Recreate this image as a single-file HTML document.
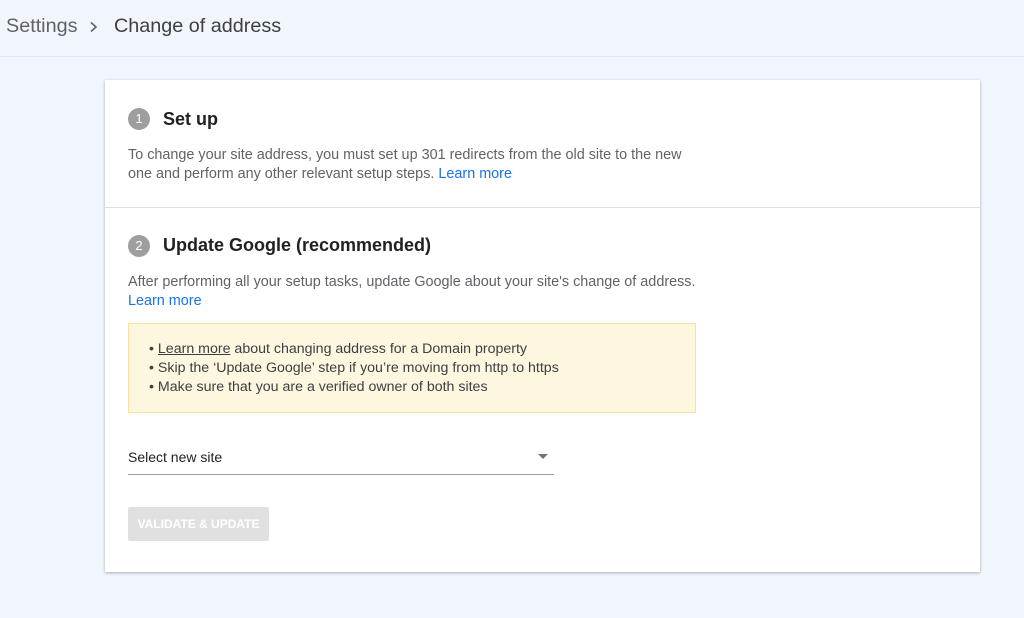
<!DOCTYPE html>
<html><head><style>
body{margin:0;width:1024px;height:618px;background:#f1f5fc;font-family:"Liberation Sans",sans-serif;position:relative;overflow:hidden}
.hdr{position:absolute;left:0;top:0;width:1024px;height:56px;border-bottom:1px solid #e3e8ef;}
.bc{position:absolute;top:15px;font-size:19.8px;color:#3c4043}
.card{position:absolute;left:105px;top:80px;width:875px;height:492px;background:#fff;box-shadow:0 1px 3px rgba(0,0,0,.3)}
.num{position:absolute;width:22px;height:22px;border-radius:50%;background:#9e9e9e;color:#fff;font-size:13px;text-align:center;line-height:22px}
.ttl{position:absolute;font-size:18px;font-weight:bold;color:#202124}
.p{position:absolute;font-size:14.4px;color:#5f6368;line-height:19px;white-space:nowrap}
a{color:#1a73e8;text-decoration:none}
.note{position:absolute;left:23px;top:243px;width:568px;height:90px;background:#fef7e0;border:1px solid #f6e3a4;box-sizing:border-box;padding:16px 0 0 20px;font-size:14.2px;line-height:19px;color:#3c4043;white-space:nowrap}
.note u{color:#3c4043}
</style></head><body>
<div class="hdr"></div>
<div class="bc" style="left:6px;color:#5f6368">Settings</div>
<svg style="position:absolute;left:89px;top:21px" width="10" height="12" viewBox="0 0 10 12"><path d="M2 1.5 L7 6 L2 10.5" fill="none" stroke="#5f6368" stroke-width="1.6"/></svg>
<div class="bc" style="left:114px">Change of address</div>
<div class="card">
 <div class="num" style="left:23px;top:28px">1</div>
 <div class="ttl" style="left:58px;top:29px">Set up</div>
 <div class="p" style="left:23px;top:66px">To change your site address, you must set up 301 redirects from the old site to the new<br>one and perform any other relevant setup steps. <a>Learn more</a></div>
 <div style="position:absolute;left:0;top:127px;width:875px;height:1px;background:#e0e0e0"></div>
 <div class="num" style="left:23px;top:155px">2</div>
 <div class="ttl" style="left:58px;top:155px">Update Google (recommended)</div>
 <div class="p" style="left:23px;top:193px">After performing all your setup tasks, update Google about your site's change of address.<br><a>Learn more</a></div>
 <div class="note">• <u>Learn more</u> about changing address for a Domain property<br>• Skip the ‘Update Google’ step if you’re moving from http to https<br>• Make sure that you are a verified owner of both sites</div>
 <div style="position:absolute;left:23px;top:369px;font-size:14px;color:#202124">Select new site</div>
 <div style="position:absolute;left:433px;top:374px;width:0;height:0;border-left:5px solid transparent;border-right:5px solid transparent;border-top:5px solid #757575"></div>
 <div style="position:absolute;left:23px;top:394px;width:426px;height:1px;background:#9e9e9e"></div>
 <div style="position:absolute;left:23px;top:427px;width:141px;height:34px;background:#e0e0e0;border-radius:2px;color:#fff;font-size:12px;font-weight:bold;text-align:center;line-height:34px">VALIDATE &amp; UPDATE</div>
</div>
</body></html>
